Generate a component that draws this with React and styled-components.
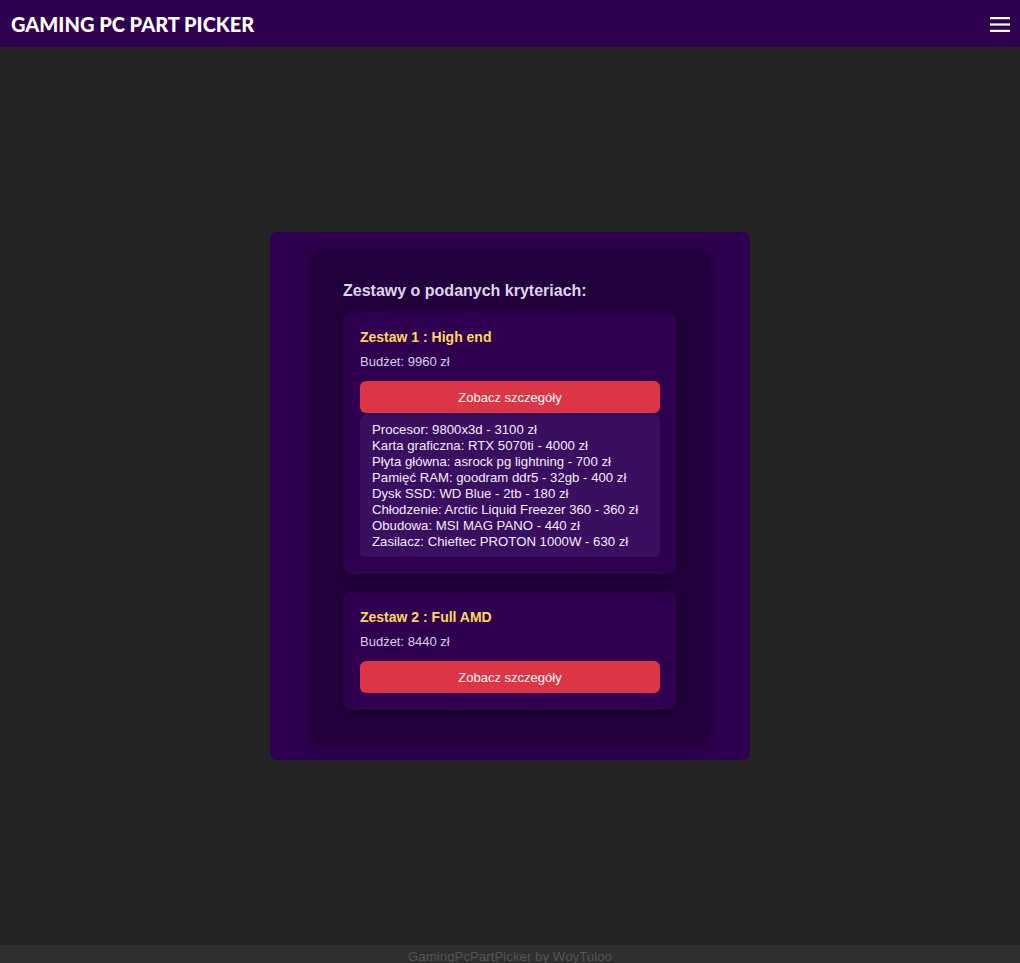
import styled, { createGlobalStyle } from "styled-components";

const GlobalStyle = createGlobalStyle`
  * { box-sizing: border-box; }
  body {
    margin: 0;
    background-color: #242424;
    font-family: 'Liberation Sans', Arial, sans-serif;
  }
`;

const Page = styled.div`
  display: flex;
  flex-direction: column;
  min-height: 100vh;
`;

const Header = styled.header`
  height: 47px;
  background-color: #2e0050;
  display: flex;
  align-items: center;
  justify-content: space-between;
  padding: 0 10px 0 11px;
`;

const Logo = styled.h1`
  margin: 0;
  color: white;
  font-family: 'Lato', sans-serif;
  font-weight: 900;
  font-size: 20px;
  letter-spacing: 0;
  text-transform: uppercase;
`;

const MenuButton = styled.button`
  background: none;
  border: none;
  padding: 0;
  width: 20px;
  height: 20px;
  cursor: pointer;
  display: flex;
`;

const Main = styled.main`
  height: calc(100vh - 65px);
  display: flex;
  align-items: center;
  justify-content: center;
`;

const Outer = styled.div`
  width: 480px;
  background-color: #2e004f;
  border-radius: 7px;
  padding: 17px 40px;
`;

const Inner = styled.div`
  background-color: #22003b;
  border-radius: 16px;
  padding: 33px 34px 33px;
  box-shadow: 0 4px 14px rgba(0, 0, 0, 0.35);
`;

const Heading = styled.h2`
  margin: 0 0 12px -1px;
  font-size: 16px;
  font-weight: bold;
  color: #ddd6ea;
`;

const List = styled.div`
  display: flex;
  flex-direction: column;
  gap: 18px;
`;

const Card = styled.div`
  background-color: #2e004f;
  border-radius: 8px;
  padding: 17px 16px;
  box-shadow: 0 3px 10px rgba(0, 0, 0, 0.4);
`;

const CardTitle = styled.h3`
  margin: 0 0 8px;
  font-size: 14px;
  line-height: 17px;
  font-weight: bold;
  color: #ffd75e;
`;

const Budget = styled.p`
  margin: 0 0 12px;
  font-size: 13px;
  line-height: 15px;
  color: #d8d0e6;
`;

const DetailsButton = styled.button`
  width: 100%;
  height: 32px;
  border: none;
  border-radius: 6px;
  background-color: #dc3545;
  color: white;
  font-family: 'Liberation Sans', Arial, sans-serif;
  font-size: 13px;
  cursor: pointer;
`;

const Details = styled.ul`
  list-style: none;
  margin: 2px 0 0;
  padding: 7px 12px;
  background-color: #3b0f60;
  border-radius: 6px;
  color: #f0ecf6;
  font-size: 13.2px;
  line-height: 16px;
`;

const Footer = styled.footer`
  background-color: #2f2f2f;
  color: #555;
  text-align: center;
  font-size: 13.3px;
  line-height: 16px;
  padding: 4px 0;
`;

const builds = [
  {
    name: "Zestaw 1 : High end",
    budget: 9960,
    open: true,
    parts: [
      "Procesor: 9800x3d - 3100 zł",
      "Karta graficzna: RTX 5070ti - 4000 zł",
      "Płyta główna: asrock pg lightning - 700 zł",
      "Pamięć RAM: goodram ddr5 - 32gb - 400 zł",
      "Dysk SSD: WD Blue - 2tb - 180 zł",
      "Chłodzenie: Arctic Liquid Freezer 360 - 360 zł",
      "Obudowa: MSI MAG PANO - 440 zł",
      "Zasilacz: Chieftec PROTON 1000W - 630 zł",
    ],
  },
  {
    name: "Zestaw 2 : Full AMD",
    budget: 8440,
    open: false,
    parts: [],
  },
];

const App = () => {
  return (
    <Page>
      <GlobalStyle />
      <Header>
        <Logo>Gaming PC Part Picker</Logo>
        <MenuButton aria-label="menu">
          <svg width="20" height="20" viewBox="0 0 20 20">
            <rect x="0" y="3" width="20" height="2.2" fill="white" />
            <rect x="0" y="9.4" width="20" height="2.2" fill="white" />
            <rect x="0" y="15.8" width="20" height="2.2" fill="white" />
          </svg>
        </MenuButton>
      </Header>
      <Main>
        <Outer>
          <Inner>
            <Heading>Zestawy o podanych kryteriach:</Heading>
            <List>
              {builds.map((b) => (
                <Card key={b.name}>
                  <CardTitle>{b.name}</CardTitle>
                  <Budget>Budżet: {b.budget} zł</Budget>
                  <DetailsButton>Zobacz szczegóły</DetailsButton>
                  {b.open && (
                    <Details>
                      {b.parts.map((p) => (
                        <li key={p}>{p}</li>
                      ))}
                    </Details>
                  )}
                </Card>
              ))}
            </List>
          </Inner>
        </Outer>
      </Main>
      <Footer>GamingPcPartPicker by WoyTuloo</Footer>
    </Page>
  );
};

export default App;
